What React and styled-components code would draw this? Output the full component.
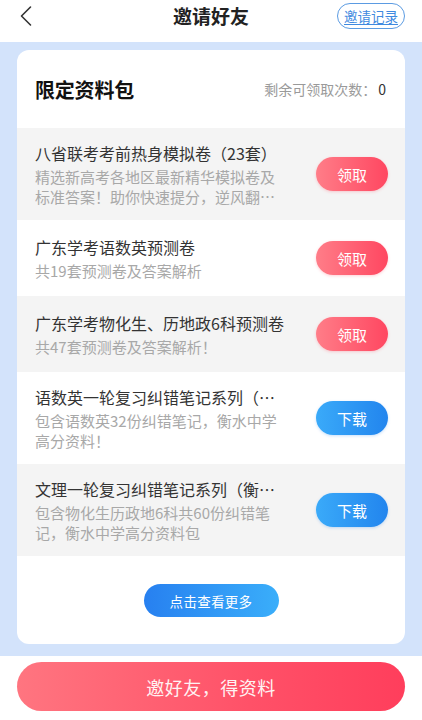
import styled, { createGlobalStyle } from 'styled-components';

const GlobalStyle = createGlobalStyle`
  html, body {
    margin: 0;
    padding: 0;
    background: #fff;
  }
  body {
    font-family: 'Noto Sans CJK SC', 'Noto Sans', sans-serif;
    color: #333;
  }
  * {
    box-sizing: border-box;
  }
`;

const items = [
  {
    title: '八省联考考前热身模拟卷（23套）',
    desc: '精选新高考各地区最新精华模拟卷及标准答案！助你快速提分，逆风翻盘，冲刺名校！',
    action: '领取'
  },
  {
    title: '广东学考语数英预测卷',
    desc: '共19套预测卷及答案解析',
    action: '领取'
  },
  {
    title: '广东学考物化生、历地政6科预测卷',
    desc: '共47套预测卷及答案解析！',
    action: '领取'
  },
  {
    title: '语数英一轮复习纠错笔记系列（衡水中学）',
    desc: '包含语数英32份纠错笔记，衡水中学高分资料！',
    action: '下载',
    blue: true
  },
  {
    title: '文理一轮复习纠错笔记系列（衡水中学）',
    desc: '包含物化生历政地6科共60份纠错笔记，衡水中学高分资料包',
    action: '下载',
    blue: true
  }
];

const Page = styled.div`
  width: 422px;
  min-height: 720px;
  display: flex;
  flex-direction: column;
`;

// Top bar
const NavBar = styled.div`
  height: 42px;
  padding: 0 17px 10px 17px;
  display: flex;
  align-items: center;
  justify-content: space-between;
  position: relative;
  background: #fff;
`;

const BackButton = styled.button`
  width: 24px;
  height: 32px;
  padding: 0;
  margin-left: 2px;
  border: none;
  background: none;
  display: flex;
  align-items: center;
`;

const NavTitle = styled.h1`
  position: absolute;
  left: 0;
  right: 0;
  top: 0;
  height: 32px;
  margin: 0;
  text-align: center;
  line-height: 32px;
  font-size: 19px;
  font-weight: 700;
  color: #222;
  pointer-events: none;
`;

const RecordLink = styled.a`
  height: 26px;
  padding: 0 6px;
  border: 1px solid #5b9be2;
  border-radius: 13px;
  font-size: 13.5px;
  line-height: 24px;
  color: #3f8ae0;
  text-decoration: underline;
  text-underline-offset: 2px;
`;

// Blue section with card
const Stage = styled.div`
  background: #d3e3fb;
  padding: 8px 17px 12px;
`;

const Card = styled.div`
  background: #fff;
  border-radius: 12px;
  overflow: hidden;
`;

const CardHead = styled.div`
  height: 78px;
  padding: 0 18px 0 18px;
  display: flex;
  align-items: center;
  justify-content: space-between;
`;

const CardTitle = styled.h2`
  margin: 0;
  font-size: 20px;
  font-weight: 700;
  color: #111;
  letter-spacing: -0.2px;
`;

const Remain = styled.span`
  font-size: 14px;
  color: #9a9a9a;
  margin-right: 1px;

  b {
    font-weight: 400;
    color: #333;
    margin-left: 2px;
  }
`;

const Row = styled.div`
  min-height: 76px;
  padding: 13px 17px 13px 18px;
  display: flex;
  align-items: center;
  justify-content: space-between;
  background: ${(p) => (p.$shaded ? '#f4f4f4' : '#fff')};
`;

const RowText = styled.div`
  width: 254px;
  display: flex;
  flex-direction: column;
  gap: 2px;
`;

const RowTitle = styled.div`
  font-size: 16px;
  line-height: 24px;
  color: #333;
  white-space: nowrap;
  overflow: hidden;
  text-overflow: ellipsis;
`;

const RowDesc = styled.div`
  max-width: 246px;
  font-size: 15px;
  line-height: 20px;
  color: #a8a8a8;
  display: -webkit-box;
  -webkit-line-clamp: 2;
  -webkit-box-orient: vertical;
  overflow: hidden;
`;

const Pill = styled.button`
  flex-shrink: 0;
  width: 72px;
  height: 34px;
  border: none;
  border-radius: 17px;
  font-family: inherit;
  font-size: 15px;
  color: #fff;
  background: ${(p) =>
    p.$blue
      ? 'linear-gradient(90deg, #3aaaf9 0%, #2285ee 100%)'
      : 'linear-gradient(90deg, #ff7d88 0%, #ff4761 100%)'};
  box-shadow: 0 1px 3px
    ${(p) => (p.$blue ? 'rgba(34, 133, 238, 0.25)' : 'rgba(255, 71, 97, 0.25)')};
`;

const MoreWrap = styled.div`
  padding: 28px 0 27px;
  display: flex;
  justify-content: center;
`;

const MoreButton = styled.button`
  width: 135px;
  height: 33px;
  border: none;
  border-radius: 17px;
  font-family: inherit;
  font-size: 13.5px;
  letter-spacing: 0.3px;
  color: #fff;
  background: linear-gradient(90deg, #2780f0 0%, #3aaefa 100%);
`;

// Bottom call to action
const Footer = styled.div`
  padding: 6px 17px 8px;
  background: #fff;
`;

const InviteButton = styled.button`
  width: 100%;
  height: 49px;
  border: none;
  border-radius: 25px;
  font-family: inherit;
  font-size: 18px;
  letter-spacing: 0.5px;
  color: #fff2f3;
  background: linear-gradient(90deg, #ff7580 0%, #ff5168 60%, #ff3e5c 100%);
`;

function ChevronLeft() {
  return (
    <svg width='14' height='22' viewBox='0 0 14 22' fill='none'>
      <path
        d='M11.5 2 L2.5 11 L11.5 20'
        stroke='#333'
        strokeWidth='1.6'
        strokeLinecap='round'
        strokeLinejoin='round'
      />
    </svg>
  );
}

export default function App() {
  return (
    <Page>
      <GlobalStyle />
      <NavBar>
        <BackButton aria-label='返回'>
          <ChevronLeft />
        </BackButton>
        <NavTitle>邀请好友</NavTitle>
        <RecordLink>邀请记录</RecordLink>
      </NavBar>

      <Stage>
        <Card>
          <CardHead>
            <CardTitle>限定资料包</CardTitle>
            <Remain>
              剩余可领取次数：<b>0</b>
            </Remain>
          </CardHead>

          {items.map((item, i) => (
            <Row key={item.title} $shaded={i % 2 === 0}>
              <RowText>
                <RowTitle>{item.title}</RowTitle>
                <RowDesc>{item.desc}</RowDesc>
              </RowText>
              <Pill $blue={item.blue}>{item.action}</Pill>
            </Row>
          ))}

          <MoreWrap>
            <MoreButton>点击查看更多</MoreButton>
          </MoreWrap>
        </Card>
      </Stage>

      <Footer>
        <InviteButton>邀好友，得资料</InviteButton>
      </Footer>
    </Page>
  );
}
